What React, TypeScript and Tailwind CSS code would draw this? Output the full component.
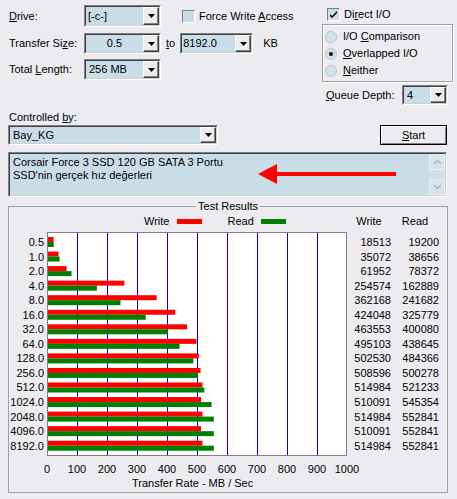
import React from 'react';

const rows: [string, number, number][] = [
    ['0.5', 18513, 19200],
    ['1.0', 35072, 38656],
    ['2.0', 61952, 78372],
    ['4.0', 254574, 162889],
    ['8.0', 362168, 241682],
    ['16.0', 424048, 325779],
    ['32.0', 463553, 400080],
    ['64.0', 495103, 438645],
    ['128.0', 502530, 484366],
    ['256.0', 508596, 500278],
    ['512.0', 514984, 521233],
    ['1024.0', 510091, 545354],
    ['2048.0', 514984, 552841],
    ['4096.0', 510091, 552841],
    ['8192.0', 514984, 552841],
];

const axis = ['0', '100', '200', '300', '400', '500', '600', '700', '800', '900', '1000'];

const DropButton = () => (
    <div className="flex w-[16px] items-center justify-center border border-t-white border-l-white border-b-[#404040] border-r-[#404040] bg-[#ecebef] shadow-[inset_-1px_-1px_0_#808080]">
        <svg width="7" height="4" viewBox="0 0 7 4">
            <path d="M0 0h7L3.5 4z" fill="#000"/>
        </svg>
    </div>
);

const Combo = ({className, text, textClass}: { className: string; text: string; textClass: string }) => (
    <div className={`flex border border-t-[#808080] border-l-[#808080] border-b-white border-r-white ${className}`}>
        <div className="flex flex-1 border border-t-[#404040] border-l-[#404040] border-b-[#d4d0c8] border-r-[#d4d0c8] bg-[#c8dde8]">
            <div className={`flex flex-1 items-center ${textClass}`}>{text}</div>
            <DropButton/>
        </div>
    </div>
);

const Check = ({checked}: { checked?: boolean }) => (
    <div className="flex h-[13px] w-[13px] items-center justify-center border border-t-[#808080] border-l-[#808080] border-b-white border-r-white bg-[#c8dde8]">
        {checked && (
            <svg width="9" height="9" viewBox="0 0 9 9">
                <path d="M1 4l2 2 5-5v2L3 8 1 6z" fill="#000"/>
            </svg>
        )}
    </div>
);

const Radio = ({checked}: { checked?: boolean }) => (
    <div className="flex h-[12px] w-[12px] items-center justify-center rounded-full border border-[#b9c6cf] bg-[#d3e1ea]">
        {checked && <div className="h-[4px] w-[4px] rounded-full bg-black"/>}
    </div>
);

export default function App() {
    return (
        <div className="relative h-[499px] w-[457px] overflow-hidden whitespace-nowrap bg-[#ecebef] font-['Liberation_Sans',Arial,sans-serif] text-[11px] leading-[15px] text-black">
            {/* top options */}
            <div className="flex h-[106px]">
                <div className="w-[322px] pl-[9px] pt-[5px]">
                    <div className="flex h-[22px] items-center">
                        <div className="w-[75px]"><u>D</u>rive:</div>
                        <Combo className="h-[22px] w-[77px]" text="[-c-]" textClass="pl-[2px]"/>
                        <div className="ml-[21px]"><Check/></div>
                        <div className="ml-[4px]">Force Write <u>A</u>ccess</div>
                    </div>
                    <div className="mt-[6px] flex h-[21px] items-center">
                        <div className="w-[75px]">Transfer Si<u>z</u>e:</div>
                        <Combo className="h-[21px] w-[77px]" text="0.5" textClass="justify-center"/>
                        <div className="ml-[5px]"><u>t</u>o</div>
                        <Combo className="ml-[5px] h-[21px] w-[73px]" text="8192.0" textClass="pl-[1px]"/>
                        <div className="ml-[10px]">KB</div>
                    </div>
                    <div className="mt-[5px] flex h-[21px] items-center">
                        <div className="w-[75px]">Total <u>L</u>ength:</div>
                        <Combo className="h-[21px] w-[77px]" text="256 MB" textClass="pl-[3px]"/>
                    </div>
                </div>
                <div className="w-[132px] pt-[7px]">
                    <div className="flex h-[14px] items-center pl-[5px]">
                        <Check checked/>
                        <div className="ml-[4px]">Di<u>r</u>ect I/O</div>
                    </div>
                    <div className="mt-[3px] w-[131px] border border-[#a0a0a0] pb-[2px] pt-[3px] shadow-[1px_1px_0_#fff,inset_1px_1px_0_#fff]">
                        <div className="flex h-[17px] items-center pl-[2px]">
                            <Radio/>
                            <div className="ml-[6px]">I/O <u>C</u>omparison</div>
                        </div>
                        <div className="flex h-[17px] items-center pl-[2px]">
                            <Radio checked/>
                            <div className="ml-[6px]"><u>O</u>verlapped I/O</div>
                        </div>
                        <div className="flex h-[17px] items-center pl-[2px]">
                            <Radio/>
                            <div className="ml-[6px]"><u>N</u>either</div>
                        </div>
                    </div>
                    <div className="mt-[3px] flex h-[20px] items-center pl-[4px]">
                        <div className="w-[76px]"><u>Q</u>ueue Depth:</div>
                        <Combo className="h-[20px] w-[46px]" text="4" textClass="pl-[3px]"/>
                    </div>
                </div>
            </div>

            {/* controlled by */}
            <div className="mt-[4px] h-[15px] pl-[9px]">Controlled <u>b</u>y:</div>
            <div className="flex h-[20px] pl-[8px] pr-[10px]">
                <Combo className="h-[20px] w-[210px]" text="Bay_KG" textClass="pl-[3px]"/>
                <button className="ml-auto flex h-[20px] w-[67px] items-center justify-center border border-black bg-[#ecebef] shadow-[inset_1px_1px_0_#fff,inset_-1px_-1px_0_#808080]">
                    <span><u>S</u>tart</span>
                </button>
            </div>

            {/* description */}
            <div className="relative mx-[8px] mt-[7px] flex h-[45px] w-[439px] border border-t-[#808080] border-l-[#808080] border-b-white border-r-white">
                <div className="flex flex-1 border border-t-[#404040] border-l-[#404040] border-b-[#d4d0c8] border-r-[#d4d0c8] bg-[#c8dde8]">
                    <div className="flex-1 pl-[3px] pt-[2px] leading-[13px]">
                        <div>Corsair Force 3 SSD 120 GB SATA 3 Portu</div>
                        <div>SSD'nin gerçek hız değerleri</div>
                    </div>
                    <div className="flex w-[16px] flex-col justify-between bg-[#d2e0e8]">
                        <div className="flex h-[16px] items-center justify-center border border-[#e6eef3] bg-[#d7e4ec]">
                            <svg width="9" height="6" viewBox="0 0 9 6">
                                <path d="M1 5l3.5-3.5L8 5" stroke="#a9bcc8" strokeWidth="1.6" fill="none"/>
                            </svg>
                        </div>
                        <div className="flex h-[16px] items-center justify-center border border-[#e6eef3] bg-[#d7e4ec]">
                            <svg width="9" height="6" viewBox="0 0 9 6">
                                <path d="M1 1l3.5 3.5L8 1" stroke="#a9bcc8" strokeWidth="1.6" fill="none"/>
                            </svg>
                        </div>
                    </div>
                </div>
                <svg className="absolute left-[249px] top-[10px]" width="140" height="22" viewBox="0 0 140 22">
                    <path d="M0 11L19 1v8h119v4H19v8z" fill="#ff0000"/>
                </svg>
            </div>

            {/* test results */}
            <fieldset className="mx-[8px] mt-[2px] w-[440px] border border-[#a0a0a0] pb-[2px]">
                <legend className="mx-auto px-[2px] leading-[15px]">Test Results</legend>
                <div className="flex">
                    <div className="w-[338px]">
                        <div className="flex h-[15px] items-center">
                            <div className="ml-[135px]">Write</div>
                            <div className="ml-[8px] h-[5px] w-[25px] bg-[#ff0000]"/>
                            <div className="ml-[25px]">Read</div>
                            <div className="ml-[7px] h-[5px] w-[25px] bg-[#008000]"/>
                        </div>
                        <div className="mt-[3px] flex">
                            <div className="w-[38px] pr-[3px] pt-[3px] text-right">
                                {rows.map(([label]) => (
                                    <div key={label} className="h-[14.55px] leading-[14.55px]">{label}</div>
                                ))}
                            </div>
                            <div className="h-[224px] w-[300px] border border-[#808080] bg-white">
                                <svg width="298" height="222" viewBox="0 0 298 222">
                                    {[1, 2, 3, 4, 5, 6, 7, 8, 9].map(k => (
                                        <rect key={k} x={29 + 30 * (k - 1)} y="0" width="1" height="222" fill="#0000ee"/>
                                    ))}
                                    {rows.map(([label, w, r], i) => (
                                        <g key={label}>
                                            <rect x="0" y={4 + 14.55 * i} width={w * 0.0003} height="5" fill="#ff0000"/>
                                            <rect x="0" y={9 + 14.55 * i} width={r * 0.0003} height="5" fill="#008000"/>
                                        </g>
                                    ))}
                                </svg>
                            </div>
                        </div>
                    </div>
                    <div className="w-[44px]">
                        <div className="h-[15px] text-center">Write</div>
                        <div className="mt-[3px] pt-[3px] text-right">
                            {rows.map(([label, w]) => (
                                <div key={label} className="h-[14.55px] leading-[14.55px]">{w}</div>
                            ))}
                        </div>
                    </div>
                    <div className="w-[48px]">
                        <div className="h-[15px] text-center">Read</div>
                        <div className="mt-[3px] pt-[3px] text-right">
                            {rows.map(([label, , r]) => (
                                <div key={label} className="h-[14.55px] leading-[14.55px]">{r}</div>
                            ))}
                        </div>
                    </div>
                </div>
                <div className="mt-[6px] flex h-[14px] items-center pl-[23px]">
                    {axis.map(a => (
                        <div key={a} className="w-[30px] text-center">{a}</div>
                    ))}
                </div>
                <div className="h-[14px] pl-[123px] leading-[14px]">Transfer Rate - MB / Sec</div>
            </fieldset>
        </div>
    );
}
